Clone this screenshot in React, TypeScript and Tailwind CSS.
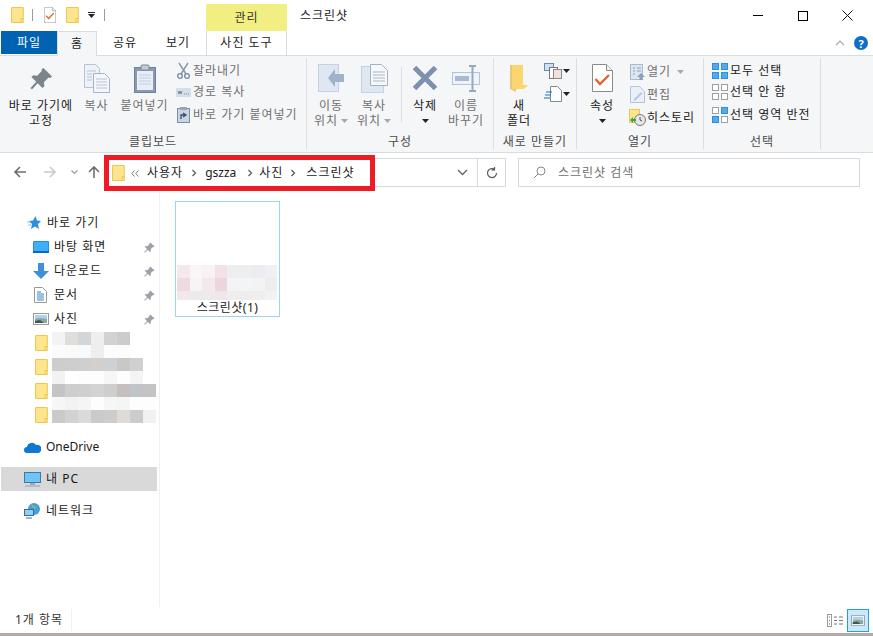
import React from "react";

const Folder = ({ w = 13, h = 16 }: { w?: number; h?: number }) => (
  <svg width={w} height={h} viewBox="0 0 13 16" className="shrink-0">
    <path d="M.5.5h11.8v15H.5z" fill="#fde48f" stroke="#eec84c" />
    <path d="M10 15.500v-4h2.500" fill="none" stroke="#eec84c" />
  </svg>
);

const Caret = ({ c = "#222" }: { c?: string }) => (
  <svg width="7" height="4" viewBox="0 0 7 4" className="shrink-0"><path d="M0 0h7L3.500 4z" fill={c} /></svg>
);

const Pin = ({ s = 12, c = "#9aa0a6" }: { s?: number; c?: string }) => (
  <svg width={s} height={s} viewBox="0 0 24 24" className="shrink-0">
    <path d="M14 1l9 9-2 1.500-1.500-.5-5 5 .5 4-2 2-5-5-6 6.500-1.500-1.500 6-6.500-5-5 2-2 4 .5 5-5-.5-1.500z" fill={c} />
  </svg>
);

const CheckDoc = ({ w = 21, h = 28 }: { w?: number; h?: number }) => (
  <svg width={w} height={h} viewBox="0 0 21 28" className="shrink-0">
    <path d="M.5.5h14l6 6v21H.5z" fill="#fff" stroke="#8a8a8a" />
    <path d="M14.500.5v6h6" fill="#f0f0f0" stroke="#8a8a8a" />
    <path d="M3.500 15l4.500 5 9-9" fill="none" stroke="#e8602c" strokeWidth="2.300" />
  </svg>
);

const Label = ({ children, className = "" }: { children: React.ReactNode; className?: string }) => (
  <span className={`whitespace-nowrap tracking-[1px] ${className}`}>{children}</span>
);

const Large = ({ w, icon, lines, text, gray, caret }: { w: number; icon: React.ReactNode; lines?: React.ReactNode[]; text?: React.ReactNode; gray?: boolean; caret?: boolean }) => (
  <div style={{ width: w }} className={`flex flex-col items-center shrink-0 text-xs leading-[15px] ${gray ? "text-[#6f6f6f]" : "text-[#1a1a1a]"}`}>
    <div className="h-[40px] flex items-center justify-center">{icon}</div>
    {text && <div className="leading-[15px] text-center whitespace-nowrap tracking-[1px]">{text}</div>}
    {lines && lines.map((l, i) => <div key={i} className="h-[15px] leading-[15px] whitespace-nowrap tracking-[1px]">{l}</div>)}
    {caret && <div className="h-[15px] flex items-center"><Caret /></div>}
  </div>
);

const Small = ({ icon, text, gray, h = 22 }: { icon: React.ReactNode; text: React.ReactNode; gray?: boolean; h?: number }) => (
  <div style={{ height: h }} className={`flex items-center text-xs ${gray ? "text-[#6f6f6f]" : "text-[#1a1a1a]"}`}>
    <div className="w-[18px] flex justify-center shrink-0">{icon}</div>
    <Label className="ml-[1px] flex items-center gap-[6px]">{text}</Label>
  </div>
);

const Group = ({ w, label, children }: { w: number; label: string; children: React.ReactNode }) => (
  <div style={{ width: w }} className="shrink-0 flex flex-col h-[91px] border-r border-[#dcdddf]">
    <div className="h-[75px] flex">{children}</div>
    <div className="h-[16px] pt-[2px] flex items-center justify-center text-xs text-[#4a4a4a]"><Label>{label}</Label></div>
  </div>
);

const Grid4 = ({ fills, stroke }: { fills: string[]; stroke: string[] }) => (
  <svg width="16" height="16" viewBox="0 0 16 16" className="shrink-0">
    {[[0, 0], [9, 0], [0, 9], [9, 9]].map(([x, y], i) => (
      <rect key={i} x={x + 0.5} y={y + 0.5} width="6" height="6" fill={fills[i]} stroke={stroke[i]} />
    ))}
  </svg>
);

const Photo = ({ w = 16, h = 12 }: { w?: number; h?: number }) => (
  <svg width={w} height={h} viewBox="0 0 16 12" className="shrink-0">
    <rect x=".5" y=".5" width="15" height="11" fill="#fff" stroke="#9a9a9a" />
    <rect x="2" y="2" width="12" height="4" fill="#a9d3f2" />
    <path d="M2 6l5-1 7 1v4H2z" fill="#8da59a" />
    <path d="M2 8l5-1 4 3H2z" fill="#3d5a4c" />
  </svg>
);

const Arrow = ({ c, left }: { c: string; left?: boolean }) => (
  <svg width="14" height="14" viewBox="0 0 14 14" style={{ transform: left ? "none" : "scaleX(-1)" }}>
    <path d="M13 7H2M7 2L2 7l5 5" fill="none" stroke={c} strokeWidth="1.600" />
  </svg>
);

const Sep = () => <svg width="6" height="8" viewBox="0 0 6 8" className="shrink-0"><path d="M1.500 1l3 3-3 3" fill="none" stroke="#555" strokeWidth="1.200" /></svg>;

const mosaic = [
  ["#f3f3f3", "#e0dedb", "#d3d6d9", "#eeeeee", "#d2d2d2", "#cccccc"],
  ["#fbfbfb", "#fafaf8", "#f7f9fb", "#eeeeee", "#fcfcfc", "#fcfcfc"],
  ["#cdcdcd", "#cecece", "#cfcfcf", "#d4cfcc", "#cdd1d6", "#c8c8c8", "#d0d0d0"],
  ["#f2f2f2", "#ffffff", "#fdfdfd", "#fdfdfd", "#f6f6f6", "#fdfdfd", "#f4f4f4"],
  ["#c4c4c4", "#cecece", "#cfcfcf", "#d3d3d3", "#cfcdcd", "#c5bfbf", "#c0c4c8", "#c4c4c4"],
  ["#f6f6f6", "#f2f2f2", "#f5f5f5", "#fdfdfd", "#f6f6f6", "#f5f5f5", "#fdfdfd", "#fdfdfd"],
  ["#cacaca", "#d2d2d2", "#dadada", "#ccc9c9", "#cdcdcd", "#dedad6", "#cbccce", "#f0f1f3"],
];

const thumb = [
  ["#f5e9ec", "#f8f6f7", "#f9f2f4", "#f2e2e7", "#eceef0", "#eceef0", "#ecedf0", "#eff0f1"],
  ["#eedbe1", "#f6f4f5", "#f5e8ec", "#ecd6dd", "#f3f4f5", "#f3f4f5", "#f3f3f4", "#ededee"],
  ["#f0e8ea", "#ebe9ea", "#eeeaeb", "#efe7e9", "#efedee", "#eeeced", "#efedee", "#f3f2f2"],
];

const NavRow = ({ icon, text, pin, indent = 33, hl, latin }: { icon: React.ReactNode; text: string; pin?: boolean; indent?: number; hl?: boolean; latin?: boolean }) => (
  <div style={{ paddingLeft: indent }} className={`h-[24px] flex items-center text-xs text-[#1a1a1a] ${hl ? "bg-[#d9d9d9] mx-[1px] w-[156px]" : "w-[158px]"}`}>
    <div className="w-[17px] flex justify-center shrink-0">{icon}</div>
    {latin ? <span className="ml-[5px] whitespace-nowrap">{text}</span> : <Label className="ml-[5px]">{text}</Label>}
    {pin && <div className="ml-auto mr-[3px]"><Pin s={11} /></div>}
  </div>
);

export default function App() {
  return (
    <div className="w-[873px] h-[636px] overflow-hidden bg-white flex flex-col text-xs text-[#1a1a1a]" style={{ fontFamily: '"Noto Sans", "Noto Sans CJK KR", sans-serif' }}>
      {/* Title */}
      <div className="h-[31px] flex items-end shrink-0">
        <div className="h-[31px] w-[206px] flex items-center pl-[11px] pb-[1px]">
          <Folder />
          <div className="ml-[8px] w-px h-[12px] bg-[#9a9a9a]" />
          <div className="ml-[11px]"><CheckDoc w={12} h={16} /></div>
          <div className="ml-[10px]"><Folder /></div>
          <div className="ml-[9px] flex flex-col items-center gap-[1px]"><div className="w-[7px] h-px bg-[#222]" /><Caret /></div>
          <div className="ml-[9px] w-px h-[12px] bg-[#9a9a9a]" />
        </div>
        <div className="w-[81px] h-[27px] bg-[#f1ef82] flex items-center justify-center text-[#333]"><Label>관리</Label></div>
        <div className="h-[31px] flex items-center ml-[13px] pt-[1px]"><Label>스크린샷</Label></div>
        <div className="ml-auto h-[31px] flex pr-[3px]">
          {[
            <div className="w-[10px] h-px bg-black" />,
            <div className="w-[10px] h-[10px] border border-black" />,
            <svg width="11" height="11" viewBox="0 0 11 11"><path d="M.5.5l10 10M10.500.5l-10 10" stroke="#111" /></svg>,
          ].map((x, i) => <div key={i} className="w-[45px] flex items-center justify-center">{x}</div>)}
        </div>
      </div>

      {/* Tabs */}
      <div className="h-[24px] flex shrink-0 relative z-10 text-xs">
        <div className="ml-[1px] w-[56px] h-[23px] bg-[#0063b1] text-white flex items-center justify-center"><Label>파일</Label></div>
        <div className="w-[40px] h-[25px] bg-[#f5f6f7] border-x border-t border-[#dadbdc] flex items-center justify-center pb-[1px]"><Label>홈</Label></div>
        <div className="w-[56px] flex items-center justify-center"><Label>공유</Label></div>
        <div className="w-[50px] flex items-center justify-center"><Label>보기</Label></div>
        <div className="ml-[3px] w-[81px] border-x border-[#dadbdc] flex items-center justify-center"><Label>사진 도구</Label></div>
        <div className="ml-auto flex items-center pr-[5px] gap-[9px]">
          <svg width="10" height="6" viewBox="0 0 10 6"><path d="M1 5l4-4 4 4" fill="none" stroke="#a8a8a8" strokeWidth="1.200" /></svg>
          <div className="w-[14px] h-[14px] rounded-full bg-[#0f6fc6] text-white text-[11px] font-bold leading-none flex items-center justify-center">?</div>
        </div>
      </div>

      {/* Ribbon */}
      <div className="h-[98px] shrink-0 bg-[#f5f6f7] border-t border-b border-[#dadbdc] pt-[2px] flex">
        <Group w={307} label="클립보드">
          <Large w={82} text={<>바로 가기에<br />고정</>} icon={<Pin s={23} c="#7d858c" />} />
          <Large w={29} gray lines={["복사"]} icon={
            <svg width="26" height="29" viewBox="0 0 26 29">
              <path d="M.5.5h11l4 4v19H.5z" fill="#eef2f8" stroke="#b4c2d6" />
              <path d="M9.500 9.500h11l5 5v14h-16z" fill="#f4f6fa" stroke="#a4b4cc" />
              <path d="M3 7h9M3 10h5M3 13h5M3 16h5M12 15h11M12 18h11M12 21h11M12 24h11" stroke="#b8c4d6" />
            </svg>
          } />
          <Large w={67} gray lines={["붙여넣기"]} icon={
            <svg width="22" height="29" viewBox="0 0 22 29">
              <rect x=".5" y="3.500" width="21" height="25" fill="#8a9ab0" stroke="#6f8098" />
              <rect x="3" y="7" width="16" height="19" fill="#e8edf6" />
              <path d="M5 11h12M5 14h12M5 17h12M5 20h12" stroke="#c2cfe2" />
              <rect x="7" y="1" width="8" height="5" rx="1" fill="#c4c9d2" stroke="#7d8794" />
            </svg>
          } />
          <div className="w-[129px] pt-[2px]">
            <div className="ml-[-4px]">
              <Small gray h={21} text="잘라내기" icon={
                <svg width="13" height="17" viewBox="0 0 13 17"><path d="M2 1l7 11M11 1L4 12" stroke="#8e9aa8" strokeWidth="1.500" /><circle cx="3" cy="14" r="2.300" fill="none" stroke="#6f87a8" strokeWidth="1.300" /><circle cx="10" cy="14" r="2.300" fill="none" stroke="#6f87a8" strokeWidth="1.300" /></svg>
              } />
              <Small gray h={22} text="경로 복사" icon={
                <svg width="15" height="9" viewBox="0 0 15 9"><rect width="15" height="9" fill="#d4deec" /><path d="M2 3l1 3 1-3 1 3 1-3M8 6h1M10 6h1M12 6h1" stroke="#5a6a80" strokeWidth=".7" fill="none" /></svg>
              } />
              <Small gray h={24} text="바로 가기 붙여넣기" icon={
                <svg width="13" height="16" viewBox="0 0 13 16"><rect x=".5" y="1.500" width="12" height="14" fill="#c9d4e4" stroke="#7d8da4" /><rect x="3" y="0" width="7" height="3" fill="#9aa5b4" /><path d="M4 12V8h4M6 6l3 2-3 2" fill="none" stroke="#3d4e66" strokeWidth="1.300" /></svg>
              } />
            </div>
          </div>
        </Group>

        <Group w={187} label="구성">
          <div className="flex w-[94px] pl-[2px]">
            <Large w={44} gray lines={["이동", <span className="flex items-center gap-[3px]">위치<Caret c="#a8a8a8" /></span>]} icon={
              <svg width="27" height="28" viewBox="0 0 27 28"><rect x=".5" y=".5" width="20" height="27" fill="#dfe7f3" stroke="#c4d1e4" /><path d="M26 13h-9V8l-7 9 7 9v-5h9z" transform="translate(0 -3)" fill="#9fb1cb" /></svg>
            } />
            <Large w={42} gray lines={["복사", <span className="flex items-center gap-[3px]">위치<Caret c="#a8a8a8" /></span>]} icon={
              <svg width="27" height="29" viewBox="0 0 27 29"><rect x=".5" y="2.500" width="22" height="26" fill="#dfe7f3" stroke="#c4d1e4" /><path d="M9.500.5h11l6 6v15h-17z" fill="#f7f8fb" stroke="#a4b0c4" /><path d="M12 8h12M12 11h12M12 14h12M12 17h12" stroke="#aab6c8" /></svg>
            } />
          </div>
          <div className="w-px h-[55px] mt-[9px] bg-[#dcdddf]" />
          <div className="flex flex-1">
            <Large w={46} lines={["삭제"]} caret icon={
              <svg width="26" height="26" viewBox="0 0 26 26"><path d="M2.500 2.500l21 21M23.500 2.500l-21 21" stroke="#7f8fae" strokeWidth="5" /></svg>
            } />
            <Large w={36} gray text={<>이름<br />바꾸기</>} icon={
              <svg width="28" height="27" viewBox="0 0 28 27"><rect x=".5" y="7.500" width="27" height="12" fill="#f0f4fa" stroke="#b4c3d9" /><rect x="3" y="11" width="14" height="5" fill="#a9b9d1" /><path d="M17 1h7M17 26h7M20.500 1v25" stroke="#97a8c2" strokeWidth="2" fill="none" /></svg>
            } />
          </div>
        </Group>

        <Group w={83} label="새로 만들기">
          <Large w={50} text={<>새<br />폴더</>} icon={
            <svg width="18" height="27" viewBox="0 0 18 27"><path d="M0 0h12v20H6v7L0 24z" fill="#e8c77a" /><path d="M2 0h11v20h5L14 24H2z" fill="#fbd66f" /></svg>
          } />
          <div className="flex flex-col pt-[4px] gap-[6px]">
            <div className="flex items-center gap-[1px] h-[17px]">
              <svg width="18" height="16" viewBox="0 0 18 16"><rect x=".5" y=".5" width="9" height="7" fill="#cfe0f0" stroke="#6a8bad" /><rect x="5.500" y="4.500" width="8" height="11" fill="#fff" stroke="#777" /><rect x="9.500" y="6.500" width="8" height="9" fill="#f2dfe0" stroke="#888" /></svg>
              <Caret />
            </div>
            <div className="flex items-center gap-[1px] h-[17px]">
              <svg width="18" height="16" viewBox="0 0 18 16"><path d="M6.500.5h7l4 4v11h-11z" fill="#fff" stroke="#888" /><path d="M2 6h6M1 9h6M0 12h6" stroke="#1a6fc4" strokeWidth="1.200" /></svg>
              <Caret />
            </div>
          </div>
        </Group>

        <Group w={127} label="열기">
          <Large w={50} lines={["속성"]} caret icon={<CheckDoc />} />
          <div className="pl-[1px] pt-[2px]">
            <Small gray h={23} text={<>열기<Caret c="#a8a8a8" /></>} icon={
              <svg width="15" height="16" viewBox="0 0 15 16"><rect x=".5" y=".5" width="12" height="15" fill="#dde5f0" stroke="#aab8cc" /><path d="M3 4h2M7 4h4M3 7h2M7 7h4M3 10h2" stroke="#8da0ba" /><path d="M11 9l4 4h-2.500v3h-3v-3H7z" fill="#8da0ba" /></svg>
            } />
            <Small gray h={23} text="편집" icon={
              <svg width="15" height="17" viewBox="0 0 15 17"><path d="M.5.5h9l5 5v11H.5z" fill="#eaf0f8" stroke="#b4c3d9" /><path d="M4 13l7-7 1.500 1.500-7 7H4z" fill="#b9c8dc" /></svg>
            } />
            <Small h={23} text="히스토리" icon={
              <svg width="17" height="17" viewBox="0 0 17 17"><rect x=".5" y=".5" width="10" height="13" fill="#fde48f" stroke="#eec84c" /><circle cx="11" cy="11" r="5.500" fill="#e6e6e6" stroke="#7a7a7a" /><path d="M11 8v3l2 1" fill="none" stroke="#555" /><path d="M1 11l3-3v2h3v2H4v2z" fill="#3aa53a" /></svg>
            } />
          </div>
        </Group>

        <Group w={117} label="선택">
          <div className="pl-[7px] pt-[2px]">
            <Small h={21} text="모두 선택" icon={<Grid4 fills={["#55aaee", "#55aaee", "#55aaee", "#55aaee"]} stroke={["#2a8fe0", "#2a8fe0", "#2a8fe0", "#2a8fe0"]} />} />
            <Small h={22} text="선택 안 함" icon={<Grid4 fills={["#fff", "#fff", "#fff", "#fff"]} stroke={["#a0a0a0", "#a0a0a0", "#a0a0a0", "#a0a0a0"]} />} />
            <Small h={24} text="선택 영역 반전" icon={<Grid4 fills={["#fff", "#55aaee", "#55aaee", "#fff"]} stroke={["#a0a0a0", "#2a8fe0", "#2a8fe0", "#a0a0a0"]} />} />
          </div>
        </Group>
      </div>

      {/* Nav */}
      <div className="h-[39px] shrink-0 flex items-center relative">
        <div className="w-[104px] flex items-center shrink-0 pb-[1px]">
          <div className="ml-[13px]"><Arrow c="#6e6e6e" left /></div>
          <div className="ml-[16px]"><Arrow c="#c8c8c8" /></div>
          <svg className="ml-[14px]" width="7" height="5" viewBox="0 0 7 5"><path d="M.5.5l3 3 3-3" fill="none" stroke="#9a9a9a" strokeWidth="1.200" /></svg>
          <svg className="ml-[9px] rotate-90" width="14" height="14" viewBox="0 0 14 14"><path d="M13 7H2M7 2L2 7l5 5" fill="none" stroke="#6e6e6e" strokeWidth="1.600" /></svg>
        </div>
        <div className="w-[402px] h-[29px] shrink-0 border border-[#d9d9d9] flex">
          <div className="w-[372px] flex items-center justify-end pr-[9px]">
            <svg width="11" height="7" viewBox="0 0 11 7"><path d="M1 1l4.500 4.500L10 1" fill="none" stroke="#666" strokeWidth="1.400" /></svg>
          </div>
          <div className="flex-1 border-l border-[#d9d9d9] flex items-center justify-center">
            <svg width="14" height="14" viewBox="0 0 14 14"><path d="M11.500 7a4.500 4.500 0 1 1-2-3.700M9.500 1v3h-3" fill="none" stroke="#555" strokeWidth="1.200" /></svg>
          </div>
        </div>
        <div className="ml-[12px] w-[342px] h-[29px] shrink-0 border border-[#d9d9d9] flex items-center pl-[14px] text-[#6d6d6d]">
          <svg width="13" height="13" viewBox="0 0 13 13"><circle cx="8" cy="5" r="4" fill="none" stroke="#8a8a8a" /><path d="M5 8l-4 4" stroke="#8a8a8a" /></svg>
          <Label className="ml-[12px]">스크린샷 검색</Label>
        </div>
        {/* highlight annotation lying over the address bar */}
        <div className="absolute left-[104px] top-[2px] w-[271px] h-[36px] border-[5px] border-[#ed1c24] bg-white flex items-center pl-[3px] text-[#1a1a1a]">
          <Folder />
          <svg className="ml-[6px] shrink-0" width="8" height="7" viewBox="0 0 8 7"><path d="M3.500.5L.8 3.500l2.700 3M7.500.5L4.800 3.500l2.700 3" fill="none" stroke="#777" /></svg>
          <Label className="ml-[8px]">사용자</Label>
          <div className="ml-[8px]"><Sep /></div>
          <span className="ml-[8px] text-[12px]">gszza</span>
          <div className="ml-[11px]"><Sep /></div>
          <Label className="ml-[6px]">사진</Label>
          <div className="ml-[7px]"><Sep /></div>
          <Label className="ml-[10px]">스크린샷</Label>
        </div>
      </div>

      {/* Main */}
      <div className="flex-1 flex min-h-0">
        <div className="w-[160px] shrink-0 border-r border-[#f0f0f0] pt-[19px] relative">
          <NavRow indent={25} text="바로 가기" icon={
            <svg width="14" height="14" viewBox="0 0 14 14"><path d="M8.500 0l1.500 4.500 4 .5-3 3 1 5-4-2.500L4 13l1-5-3-3 4-.5z" fill="#2f8fe0" /><path d="M0 6h3M1 9h3" stroke="#8cc4ee" /></svg>
          } />
          <NavRow pin indent={32} text="바탕 화면" icon={
            <svg width="16" height="12" viewBox="0 0 16 12"><rect width="16" height="12" rx="1" fill="#1e90e8" /><rect x="1" y="1" width="14" height="9" fill="#3fb0f5" /><rect y="10" width="16" height="2" fill="#0c68b8" /></svg>
          } />
          <NavRow pin indent={32} text="다운로드" icon={
            <svg width="16" height="16" viewBox="0 0 16 16"><path d="M5 0h6v8h5l-8 8-8-8h5z" fill="#3f8fdc" /></svg>
          } />
          <NavRow pin indent={32} text="문서" icon={
            <svg width="13" height="16" viewBox="0 0 13 16"><path d="M.5.5h8l4 4v11H.5z" fill="#fff" stroke="#9a9a9a" /><path d="M3 5h4M3 7h7M3 9h7M3 11h7M3 13h7" stroke="#3a86c8" /></svg>
          } />
          <NavRow pin indent={32} text="사진" icon={<Photo />} />
          {[0, 1, 2, 3].map((i) => (
            <div key={i} className="h-[24px] pl-[35px] flex items-center"><Folder /></div>
          ))}
          {/* pixelated names lying over the list */}
          <div className="absolute left-[52px] top-[140px] flex flex-col">
            {mosaic.map((r, i) => (
              <div key={i} className="flex h-[13px]">
                {r.map((c, j) => <div key={j} style={{ background: c }} className="w-[13px] h-[13px]" />)}
              </div>
            ))}
          </div>
          <div className="h-[8px]" />
          <NavRow indent={24} latin text="OneDrive" icon={
            <svg width="17" height="11" viewBox="0 0 17 11"><path d="M3 11a3 3 0 0 1 0-6 5 5 0 0 1 9-2 3.500 3.500 0 0 1 2.500 8z" fill="#0f78d4" /></svg>
          } />
          <div className="h-[8px]" />
          <NavRow hl indent={23} text="내 PC" icon={
            <svg width="17" height="15" viewBox="0 0 17 15"><rect x=".5" y=".5" width="16" height="10" fill="#6fc4f5" stroke="#3a7ca8" /><path d="M6 11h5v2H6z" fill="#9ab0c0" /><path d="M1 14h15" stroke="#8aa0b4" /></svg>
          } />
          <div className="h-[8px]" />
          <NavRow indent={24} text="네트워크" icon={
            <svg width="17" height="16" viewBox="0 0 17 16"><circle cx="10" cy="6" r="6" fill="#4a9bd8" /><path d="M7 1c2 1 3 3 6 3-2 3-5 1-6-3z" fill="#7cc47c" /><rect x=".5" y="6.500" width="9" height="6" fill="#8fd0f5" stroke="#3a6e96" /><path d="M2 15h6" stroke="#3a6e96" /></svg>
          } />
        </div>
        <div className="flex-1 pl-[15px] pt-[9px]">
          <div className="w-[105px] h-[116px] border border-[#99d1ff] flex flex-col">
            <div className="h-[63px] shrink-0" />
            <div className="ml-[1px] flex flex-col shrink-0">
              {thumb.map((r, i) => (
                <div key={i} style={{ height: i === 2 ? 9 : 13 }} className="flex">
                  {r.map((c, j) => <div key={j} style={{ background: c }} className="w-[12.500px]" />)}
                </div>
              ))}
            </div>
            <div className="flex-1 flex items-center justify-center pb-[2px]">
              <span className="tracking-[0.5px]">스크린샷(1)</span>
            </div>
          </div>
        </div>
      </div>

      {/* Status */}
      <div className="h-[26px] shrink-0 flex items-center">
        <div className="w-[72px] pl-[15px] text-[#333] border-r border-[#f0f0f0] h-[22px] flex items-center"><Label>1개 항목</Label></div>
        <div className="ml-auto flex items-center pr-[4px] gap-[3px]">
          <svg width="17" height="13" viewBox="0 0 17 13">
            <rect x=".5" y=".5" width="4" height="12" fill="#fff" stroke="#9a9a9a" />
            <path d="M2 3h1" stroke="#555" /><path d="M2 6.500h1" stroke="#3a7fd0" /><path d="M2 10h1" stroke="#d04040" />
            <path d="M7 3h3M12 3h4M7 6.500h3M12 6.500h4M7 10h3M12 10h4" stroke="#777" />
          </svg>
          <div className="w-[22px] h-[23px] bg-[#cce8ff] border border-[#26a0da] flex items-center justify-center"><Photo w={14} h={11} /></div>
        </div>
      </div>
      <div className="h-[3px] shrink-0 bg-[#b5aaaa]" />
    </div>
  );
}
